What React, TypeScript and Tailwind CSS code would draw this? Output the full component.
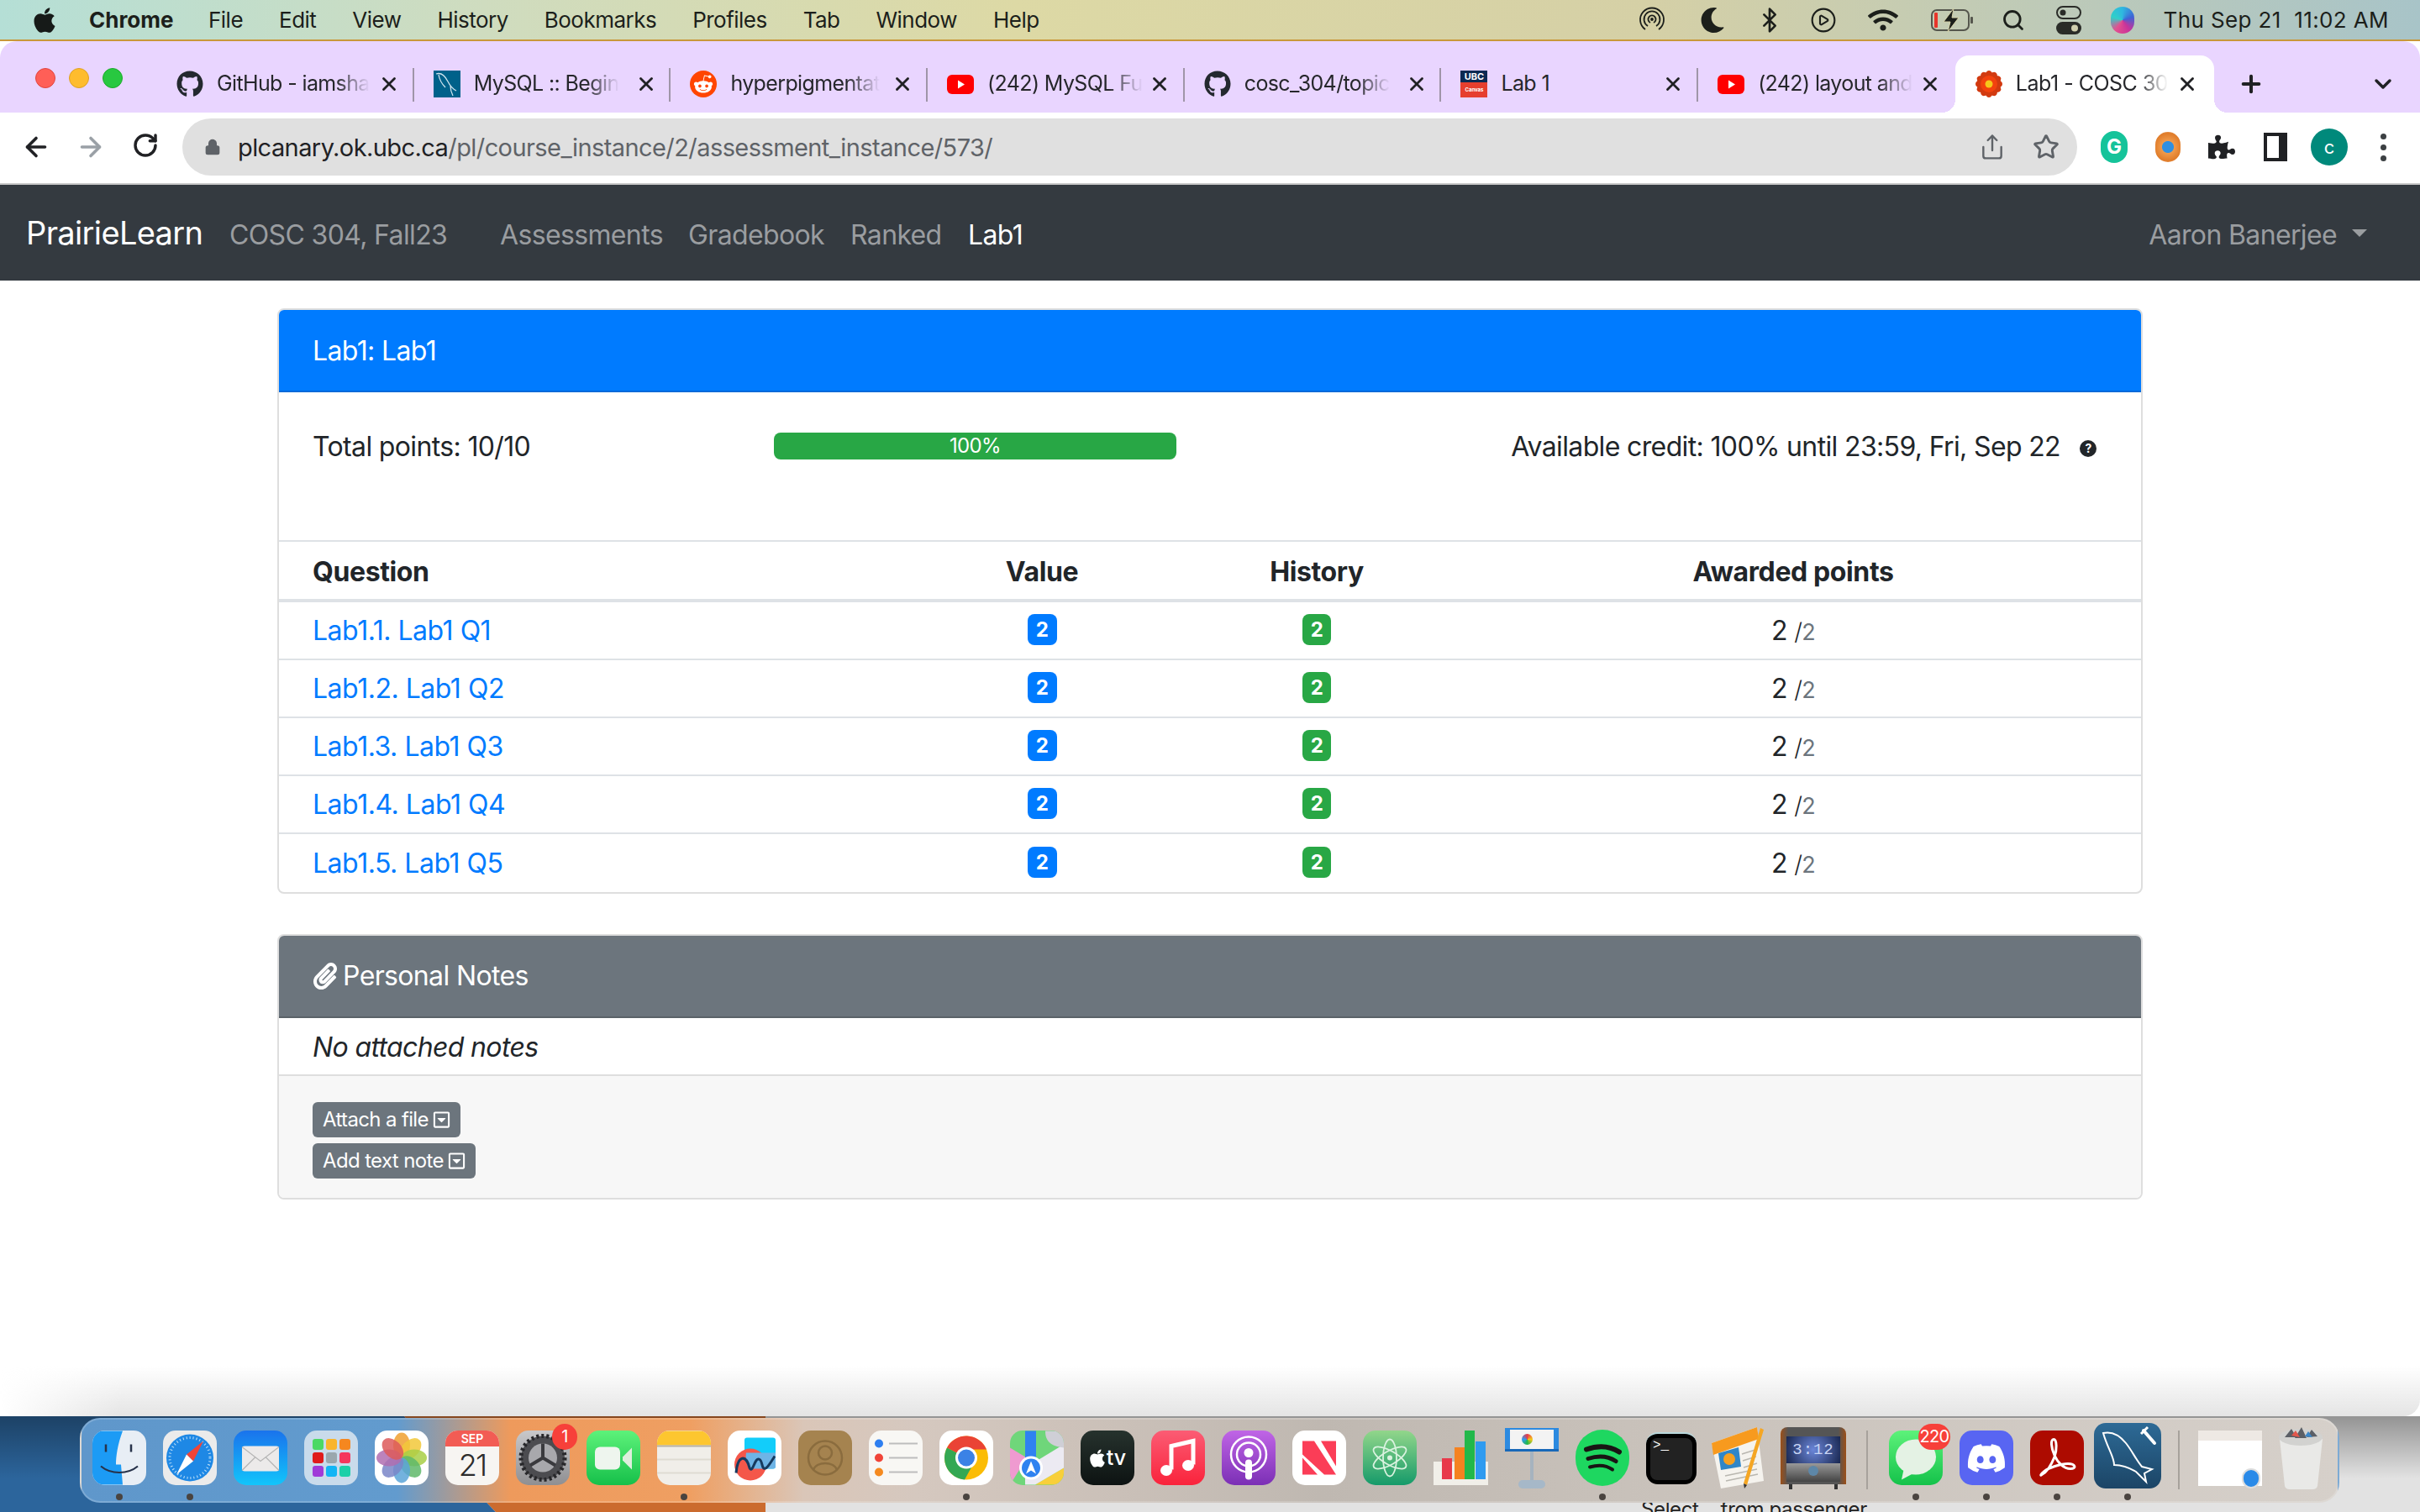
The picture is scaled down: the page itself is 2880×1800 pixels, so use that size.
import { ReactNode } from "react";
import { FaApple, FaDiscord, FaGithub, FaMoon, FaPaperclip, FaPuzzlePiece, FaRedditAlien, FaRegCaretSquareDown, FaWifi } from "react-icons/fa";
import { ArrowLeft, ArrowRight, Bluetooth, ChevronDown, CirclePlay, Lock, Plus, RotateCw, Search, Share, Star, X } from "lucide-react";

function YouTubeIcon() {
  return (
    <svg viewBox="0 0 32 32" className="w-8 h-8">
      <rect x="0" y="5" width="32" height="23" rx="6" fill="#ff0000" />
      <path d="M13 11.5 21 16.5 13 21.5z" fill="#fff" />
    </svg>
  );
}

function MysqlFavicon() {
  return (
    <svg viewBox="0 0 32 32" className="w-8 h-8">
      <rect width="32" height="32" fill="#00618a" />
      <path d="M3 4c6-2 11 3 14 9s6 9 10 11M6 5c1 6 4 11 8 15M20 18c0 4 1 8 3 12" fill="none" stroke="#cfe3ee" strokeWidth="1.3" />
    </svg>
  );
}

function RedditIcon() {
  return (
    <div className="w-8 h-8 rounded-full bg-[#ff4500] flex items-center justify-center">
      <FaRedditAlien className="w-6 h-6 text-white" />
    </div>
  );
}

function CanvasIcon() {
  return (
    <div className="w-8 h-8 flex flex-col text-white font-bold text-center">
      <div className="h-[14px] bg-[#0c2a52] text-[11px] leading-[14px]">UBC</div>
      <div className="h-[18px] bg-[#e63f2e] text-[6px] leading-[18px]">Canvas</div>
    </div>
  );
}

function PrairieIcon() {
  return (
    <svg viewBox="0 0 32 32" className="w-8 h-8">
      {[0, 30, 60, 90, 120, 150].map((a) => (
        <ellipse key={a} cx="16" cy="16" rx="7" ry="16" fill="#d23a10" transform={`rotate(${a} 16 16)`} />
      ))}
      <circle cx="16" cy="16" r="10" fill="#f2420e" />
      <circle cx="16" cy="16" r="4.5" fill="#f6c71a" />
    </svg>
  );
}

// titles are what the tab strip actually shows, the rest is faded away
const tabs: { title: string; icon: ReactNode; solid?: boolean }[] = [
  { title: "GitHub - iamsha", icon: <FaGithub className="w-8 h-8 text-[#24292f]" /> },
  { title: "MySQL :: Begin", icon: <MysqlFavicon /> },
  { title: "hyperpigmentat", icon: <RedditIcon /> },
  { title: "(242) MySQL Fu", icon: <YouTubeIcon /> },
  { title: "cosc_304/topic", icon: <FaGithub className="w-8 h-8 text-[#24292f]" /> },
  { title: "Lab 1", icon: <CanvasIcon />, solid: true },
  { title: "(242) layout and", icon: <YouTubeIcon /> },
];

function Tab({ title, icon, last, solid }: { title: string; icon: ReactNode; last: boolean; solid?: boolean }) {
  return (
    <div className="w-[305.7px] h-[68px] flex items-center shrink-0 relative pl-[23px]">
      <div className="w-8 h-8 shrink-0 flex items-center justify-center">{icon}</div>
      <div className="ml-4 w-[190px] whitespace-nowrap text-[25px] text-[#26272b] tracking-[-0.025em]">
        <span className={solid ? "" : "inline-block [mask-image:linear-gradient(to_right,black_78%,transparent)]"}>{title}</span>
      </div>
      <X className="w-[26px] h-[26px] ml-[2px] text-[#202124]" strokeWidth={2.6} />
      {!last && <div className="absolute right-0 top-[15px] w-[2px] h-10 bg-[#9f95a8]" />}
    </div>
  );
}

function ActiveTab() {
  return (
    <div className="w-[308px] h-[68px] bg-white rounded-t-[16px] flex items-center shrink-0 relative pl-[24px]">
      <div className="absolute -left-4 bottom-0 w-4 h-4 bg-[radial-gradient(circle_at_0_0,transparent_16px,white_16px)]" />
      <div className="absolute -right-4 bottom-0 w-4 h-4 bg-[radial-gradient(circle_at_100%_0,transparent_16px,white_16px)]" />
      <PrairieIcon />
      <div className="ml-4 w-[186px] whitespace-nowrap text-[25px] text-[#26272b] tracking-[-0.02em]">
        <span className="inline-block [mask-image:linear-gradient(to_right,black_80%,transparent)]">Lab1 - COSC 30</span>
      </div>
      <X className="w-[26px] h-[26px] ml-[5px] text-[#202124]" strokeWidth={2.6} />
    </div>
  );
}

function MenuBar() {
  const items = ["File", "Edit", "View", "History", "Bookmarks", "Profiles", "Tab", "Window", "Help"];
  return (
    <div className="h-[49px] shrink-0 flex items-center text-[#1c1f1b] text-[26px] bg-[linear-gradient(90deg,#b5dfd6_0%,#cfdcbf_20%,#ddd9a5_42%,#d5d0a6_68%,#a8c4c8_100%)] border-b-2 border-[#c9983a]">
      <FaApple className="w-[30px] h-[34px] ml-[38px] text-[#161a18]" />
      <span className="ml-[38px] font-bold w-[117px]">Chrome</span>
      <div className="flex gap-[43px] ml-[25px] tracking-[-0.02em]">
        {items.map((m) => (
          <span key={m}>{m}</span>
        ))}
      </div>
      <div className="ml-auto flex items-center gap-[32px] text-[#1c1f1b]">
        <svg viewBox="0 0 32 32" className="w-8 h-8" fill="none" stroke="currentColor" strokeWidth="1.8">
          <path d="M8 27A14 14 0 1 1 24 27M11 23A9.5 9.5 0 1 1 21 23M14 19a4.5 4.5 0 1 1 4 0" />
          <circle cx="16" cy="15" r="1" fill="currentColor" />
        </svg>
        <FaMoon className="w-[30px] h-[30px] ml-[9px]" />
        <Bluetooth className="w-8 h-8 ml-[5px]" strokeWidth={2} />
        <CirclePlay className="w-8 h-8" strokeWidth={1.6} />
        <FaWifi className="w-[36px] h-[30px] ml-[5px]" />
        <svg viewBox="0 0 52 30" className="w-[52px] h-[30px] ml-[7px]">
          <rect x="1" y="3" width="44" height="24" rx="6" fill="none" stroke="#55564d" strokeWidth="2" />
          <rect x="47" y="11" width="3" height="8" rx="1" fill="#55564d" />
          <rect x="4" y="6" width="4" height="18" rx="1" fill="#e8352b" />
          <path d="M27 1 15 17h8l-3 12 13-17h-8z" fill="#1c1f1b" stroke="#d6d2a8" strokeWidth="1" />
        </svg>
        <Search className="w-[28px] h-[28px]" strokeWidth={2.4} />
        <svg viewBox="0 0 30 34" className="w-[30px] h-[34px] ml-[5px]">
          <rect x="1" y="1" width="28" height="14" rx="7" fill="none" stroke="#2a2c28" strokeWidth="2" />
          <circle cx="8" cy="8" r="3.5" fill="#2a2c28" />
          <rect x="0" y="19" width="30" height="15" rx="7.5" fill="#2a2c28" />
          <circle cx="22" cy="26.5" r="4" fill="#d0cfae" />
        </svg>
        <div className="w-7 h-8 rounded-full bg-[conic-gradient(#2fb7e0,#3f63d6,#c8339a,#e3508f,#2fd0c8,#2fb7e0)] ml-[3px]" />
        <span className="mr-[37px] ml-[3px] text-[26px] whitespace-pre tracking-[0.015em]">Thu Sep 21  11:02 AM</span>
      </div>
    </div>
  );
}

function TabStrip() {
  return (
    <div className="h-[85px] shrink-0 bg-[#e9d5ff] flex items-end rounded-t-[20px] relative">
      <div className="w-[187px] h-[68px] shrink-0 flex items-center gap-4 pl-[42px] pb-[14px]">
        <div className="w-6 h-6 rounded-full bg-[#ff5f57] border border-[#e0443e]" />
        <div className="w-6 h-6 rounded-full bg-[#febc2e] border border-[#dea123]" />
        <div className="w-6 h-6 rounded-full bg-[#28c840] border border-[#1aab29]" />
      </div>
      {tabs.map((t, i) => (
        <Tab key={t.title} title={t.title} icon={t.icon} solid={t.solid} last={i === tabs.length - 1} />
      ))}
      <ActiveTab />
      <div className="h-[68px] flex items-center ml-[28px]">
        <Plus className="w-8 h-8 text-[#202124]" strokeWidth={3} />
      </div>
      <div className="h-[68px] flex items-center ml-auto mr-[28px]">
        <ChevronDown className="w-8 h-8 text-[#202124]" strokeWidth={2.6} />
      </div>
    </div>
  );
}

function Toolbar() {
  return (
    <div className="h-[86px] shrink-0 bg-white border-b-2 border-[#c9c9c9] flex items-center pl-[21px] pb-[2px]">
      <div className="flex gap-[21px] text-[#202124]">
        <div className="w-11 flex justify-center">
          <ArrowLeft className="w-9 h-9" strokeWidth={2.4} />
        </div>
        <div className="w-11 flex justify-center">
          <ArrowRight className="w-9 h-9 text-[#9aa0a6]" strokeWidth={2.4} />
        </div>
        <div className="w-11 flex justify-center">
          <RotateCw className="w-8 h-8" strokeWidth={2.6} />
        </div>
      </div>
      <div className="ml-[22px] w-[2255px] h-[68px] rounded-full bg-[#e0e0e0] flex items-center pl-[26px]">
        <Lock className="w-[20px] h-[24px] text-[#5f6368] fill-[#5f6368]" strokeWidth={2} />
        <span className="ml-[20px] text-[29px] tracking-[-0.02em] pt-[2px] text-[#202124]">
          plcanary.ok.ubc.ca<span className="text-[#5f6368]">/pl/course_instance/2/assessment_instance/573/</span>
        </span>
        <div className="ml-auto flex gap-[32px] mr-[21px] text-[#5f6368]">
          <Share className="w-8 h-8" strokeWidth={1.8} />
          <Star className="w-8 h-8" strokeWidth={2.2} />
        </div>
      </div>
      <div className="ml-[22px] flex items-center gap-[20px]">
        <div className="w-11 flex justify-center">
          <div className="w-8 h-[38px] rounded-full bg-[#15c39a] flex items-center justify-center text-white font-bold text-[24px]">G</div>
        </div>
        <div className="w-11 flex justify-center">
          <div className="w-[30px] h-9 rounded-full bg-[radial-gradient(circle,#2f8fe0_28%,#f09a4a_32%,#e07c2a_70%,#f6c9a0_100%)]" />
        </div>
        <div className="w-11 flex justify-center">
          <FaPuzzlePiece className="w-[32px] h-[32px] text-[#202124]" />
        </div>
        <div className="w-11 flex justify-center">
          <div className="w-[28px] h-[34px] border-y-[4px] border-l-[4px] border-r-[10px] border-[#202124]" />
        </div>
        <div className="w-11 h-11 rounded-full bg-[#00897b] flex items-center justify-center text-white text-[22px]">c</div>
        <div className="w-11 flex flex-col items-center gap-[6px]">
          <div className="w-[7px] h-[7px] rounded-full bg-[#3c4043]" />
          <div className="w-[7px] h-[7px] rounded-full bg-[#3c4043]" />
          <div className="w-[7px] h-[7px] rounded-full bg-[#3c4043]" />
        </div>
      </div>
    </div>
  );
}

function Navbar() {
  return (
    <div className="h-[114px] shrink-0 bg-[#343a40] flex items-center text-[32px] text-[#9a9da0] pl-[31px] tracking-[-0.02em]">
      <span className="text-[38px] text-white w-[242px]">PrairieLearn</span>
      <span className="w-[322px] pt-[5px]">COSC 304, Fall23</span>
      <span className="w-[224px] pt-[5px]">Assessments</span>
      <span className="w-[193px] pt-[5px]">Gradebook</span>
      <span className="w-[140px] pt-[5px]">Ranked</span>
      <span className="text-white pt-[5px]">Lab1</span>
      <span className="ml-auto pt-[5px]">Aaron Banerjee</span>
      <div className="ml-[18px] mr-[63px] mt-[1px] w-0 h-0 border-x-[9px] border-x-transparent border-t-[9px] border-t-[#9a9da0]" />
    </div>
  );
}

const rows = ["Lab1.1. Lab1 Q1", "Lab1.2. Lab1 Q2", "Lab1.3. Lab1 Q3", "Lab1.4. Lab1 Q4", "Lab1.5. Lab1 Q5"];

function AssessmentCard() {
  return (
    <div className="border-2 border-[#dedede] rounded-lg overflow-hidden text-[32px] text-[#212529] tracking-[-0.02em]">
      <div className="h-[98px] bg-[#007bff] border-b-2 border-[#0069d9] flex items-center px-10 pt-[2px] text-white">Lab1: Lab1</div>
      <div className="h-[178px] pt-[41px] pl-10 pr-[53px] flex items-start border-b-2 border-[#dee2e6]">
        <span className="w-[549px] leading-[48px]">Total points: 10/10</span>
        <div className="w-[479px] h-8 mt-[7px] rounded-lg bg-[#28a745] flex items-center justify-center text-white text-[24px]">100%</div>
        <span className="ml-auto leading-[48px]">Available credit: 100% until 23:59, Fri, Sep 22</span>
        <div className="w-5 h-5 ml-[23px] mt-[16px] rounded-full bg-[#212529] text-white text-[14px] font-bold leading-5 text-center">?</div>
      </div>
      <div className="grid grid-cols-[734px_348px_306px_1fr] h-[72px] items-center font-bold tracking-[-0.012em] border-b-4 border-[#dee2e6]">
        <span className="pl-10 pt-1">Question</span>
        <span className="text-center pt-1">Value</span>
        <span className="text-center pt-1">History</span>
        <span className="text-center pt-1">Awarded points</span>
      </div>
      {rows.map((r, i) => (
        <div key={r} className={`grid grid-cols-[734px_348px_306px_1fr] h-[69px] items-center ${i < rows.length - 1 ? "border-b-2 border-[#dee2e6]" : ""}`}>
          <span className="pl-10 text-[#007bff] tracking-[-0.015em]">{r}</span>
          <div className="flex justify-center">
            <span className="w-[35px] h-[37px] rounded-lg bg-[#007bff] text-white font-bold text-[24px] leading-[37px] text-center -mt-[3px]">2</span>
          </div>
          <div className="flex justify-center">
            <span className="w-[34px] h-[37px] rounded-lg bg-[#28a745] text-white font-bold text-[24px] leading-[37px] text-center -mt-[3px]">2</span>
          </div>
          <div className="text-center">
            2 <span className="text-[28px] font-light">/</span>
            <span className="text-[27px] text-[#6c757d]">2</span>
          </div>
        </div>
      ))}
    </div>
  );
}

function NotesCard() {
  return (
    <div className="mt-[48px] border-2 border-[#dedede] rounded-lg overflow-hidden text-[32px] text-[#212529] tracking-[-0.02em]">
      <div className="h-[98px] bg-[#6c757d] border-b-2 border-[#5a6268] flex items-center pl-10 text-white">
        <FaPaperclip className="w-[30px] h-[32px] mr-[6px]" />
        Personal Notes
      </div>
      <div className="h-[69px] bg-white border-b-2 border-[#dedede] pl-10 flex items-center italic pt-[2px]">No attached notes</div>
      <div className="h-[145px] bg-[#f7f7f7] pl-10 pt-[31px] flex flex-col items-start gap-[7px]">
        <NoteButton label="Attach a file" />
        <NoteButton label="Add text note" />
      </div>
    </div>
  );
}

function NoteButton({ label }: { label: string }) {
  return (
    <div className="h-[42px] px-3 rounded-md bg-[#6c757d] text-white text-[24px] flex items-center gap-[5px]">
      {label}
      <FaRegCaretSquareDown className="w-[21px] h-[22px]" />
    </div>
  );
}

function Tile({ className, children }: { className: string; children?: ReactNode }) {
  return <div className={`w-16 h-[65px] rounded-[15px] overflow-hidden relative flex items-center justify-center ${className}`}>{children}</div>;
}

function Svg({ children }: { children: ReactNode }) {
  return (
    <svg viewBox="0 0 64 64" className="w-full h-full absolute inset-0">
      {children}
    </svg>
  );
}

function Badge({ text, w }: { text: string; w: string }) {
  return <div className={`absolute -top-2 -right-[9px] h-[31px] rounded-full bg-[#f7403a] text-white text-[20px] leading-[31px] text-center tracking-[-0.03em] ${w}`}>{text}</div>;
}

const petals = ["#f0a030", "#f2c83a", "#a8cf45", "#5fb86a", "#5aa5d8", "#7a86c8", "#b06db0", "#dd5a5a"];

const dock: { w: string; dot?: boolean; el: ReactNode }[] = [
  {
    w: "w-16",
    dot: true,
    el: (
      <Tile className="bg-[#e8eef5]">
        <Svg>
          <path d="M0 0H36C30 16 28 30 28 40H34L36 64H0z" fill="#1c9bf5" />
          <path d="M16 16v9M46 16v9" stroke="#27324a" strokeWidth="2.5" />
          <path d="M10 42c12 10 32 10 44 0" stroke="#27324a" strokeWidth="2.2" fill="none" />
        </Svg>
      </Tile>
    ),
  },
  {
    w: "w-16",
    dot: true,
    el: (
      <Tile className="bg-[#ebebeb]">
        <Svg>
          <circle cx="32" cy="32" r="28" fill="#1e88e5" />
          <circle cx="32" cy="32" r="24" fill="none" stroke="#bfe0f8" strokeWidth="3" strokeDasharray="1 3" />
          <path d="M48 12 28 28 36 36z" fill="#f04438" />
          <path d="M16 52 28 28 36 36z" fill="#fff" />
        </Svg>
      </Tile>
    ),
  },
  {
    w: "w-16",
    el: (
      <Tile className="bg-[linear-gradient(#1a73ec,#12c5fb)]">
        <Svg>
          <rect x="10" y="18" width="44" height="30" rx="3" fill="#eceaea" />
          <path d="M10 19 32 36 54 19M10 47 26 31M54 47 38 31" stroke="#b5b5b5" strokeWidth="1.2" fill="none" />
        </Svg>
      </Tile>
    ),
  },
  {
    w: "w-16",
    el: (
      <Tile className="bg-[#c9dbeb]">
        <div className="grid grid-cols-3 gap-[3px]">
          {["bg-[#4bd964]", "bg-[#f9b52c]", "bg-[#f5871f]", "bg-[#e01b1b]", "bg-[#9aa7ad]", "bg-[#f5375c]", "bg-[#a03bd8]", "bg-[#12b5f5]", "bg-[#1bd0a8]"].map((c) => (
            <div key={c} className={`w-[13px] h-[13px] rounded-[3px] ${c}`} />
          ))}
        </div>
      </Tile>
    ),
  },
  {
    w: "w-16",
    el: (
      <Tile className="bg-white">
        <Svg>
          {petals.map((c, i) => (
            <ellipse key={c} cx="32" cy="17" rx="10" ry="15" fill={c} opacity="0.85" transform={`rotate(${i * 45} 32 32)`} />
          ))}
        </Svg>
      </Tile>
    ),
  },
  {
    w: "w-16",
    el: (
      <Tile className="bg-[#f7f5f2] flex-col justify-start">
        <div className="w-full h-[19px] bg-[#f25c54] text-white text-[14px] font-semibold leading-[19px] text-center">SEP</div>
        <div className="text-[36px] font-light leading-[44px] text-[#2c2c2c] tracking-[-0.05em]">21</div>
      </Tile>
    ),
  },
  {
    w: "w-16",
    el: (
      <div className="relative">
        <Tile className="bg-[linear-gradient(#c8c8ca,#8f8f92)]">
          <Svg>
            <circle cx="32" cy="32" r="26" fill="#4c4c50" />
            <circle cx="32" cy="32" r="26" fill="none" stroke="#27272a" strokeWidth="5" strokeDasharray="3 3" />
            <circle cx="32" cy="32" r="17" fill="#a8a8ac" />
            <path d="M32 32V15M32 32 17 41M32 32 47 41" stroke="#3a3a3e" strokeWidth="4" />
          </Svg>
        </Tile>
        <Badge text="1" w="w-[30px]" />
      </div>
    ),
  },
  {
    w: "w-16",
    el: (
      <Tile className="bg-[linear-gradient(#5df27a,#16c04a)]">
        <Svg>
          <rect x="10" y="19" width="30" height="27" rx="6" fill="#eef5ee" />
          <path d="M43 31 54 20V46L43 35z" fill="#dfeedd" />
        </Svg>
      </Tile>
    ),
  },
  {
    w: "w-16",
    dot: true,
    el: (
      <Tile className="bg-[#f0eee9]">
        <Svg>
          <rect width="64" height="17" fill="#fdc62f" />
          <path d="M0 18H64" stroke="#b7b2a5" strokeWidth="2" />
          <path d="M0 34H64M0 50H64" stroke="#dedbd3" strokeWidth="2" />
        </Svg>
      </Tile>
    ),
  },
  {
    w: "w-16",
    el: (
      <Tile className="bg-white">
        <Svg>
          <rect x="20" y="8" width="37" height="37" rx="3" fill="#12cdfa" />
          <circle cx="27" cy="40" r="19" fill="#f4574a" />
          <path d="M22 26H57V42a3 3 0 0 1-3 3H26C22 38 21 32 22 26z" fill="#6eb4e6" />
          <path d="M10 50C12 28 22 28 26 44 30 52 32 30 38 34 42 36 40 48 46 44 50 40 52 36 56 30" fill="none" stroke="#163a5f" strokeWidth="3" />
        </Svg>
      </Tile>
    ),
  },
  {
    w: "w-16",
    el: (
      <Tile className="bg-[#a5834f]">
        <Svg>
          <circle cx="32" cy="32" r="20" fill="none" stroke="#8a6c3e" strokeWidth="2.5" />
          <circle cx="32" cy="26" r="8" fill="none" stroke="#8a6c3e" strokeWidth="2.5" />
          <path d="M18 46c4-10 24-10 28 0" fill="none" stroke="#8a6c3e" strokeWidth="2.5" />
        </Svg>
      </Tile>
    ),
  },
  {
    w: "w-16",
    el: (
      <Tile className="bg-[#f8f7f4]">
        <Svg>
          <circle cx="12" cy="15" r="5" fill="#2f7ff0" />
          <circle cx="12" cy="32" r="5" fill="#f04438" />
          <circle cx="12" cy="49" r="5" fill="#f58a1f" />
          <path d="M24 15H58M24 32H58M24 49H58" stroke="#bdbdbd" strokeWidth="2" />
        </Svg>
      </Tile>
    ),
  },
  {
    w: "w-16",
    dot: true,
    el: (
      <Tile className="bg-white">
        <Svg>
          <circle cx="32" cy="32" r="26" fill="#fbbc05" />
          <path d="M32 32 9 20A26 26 0 0 1 56 22L32 22z" fill="#ea4335" />
          <path d="M9 20A26 26 0 0 0 30 58L42 36 32 32z" fill="#34a853" />
          <circle cx="32" cy="32" r="13" fill="#fff" />
          <circle cx="32" cy="32" r="10" fill="#3b82e6" />
        </Svg>
      </Tile>
    ),
  },
  {
    w: "w-16",
    el: (
      <Tile className="bg-[#6fd67a]">
        <Svg>
          <path d="M0 20 20 32 0 64z" fill="#ef9ad0" />
          <path d="M30 64 64 44V64z" fill="#f8cf3a" />
          <path d="M18 44 64 16V44L30 64H18z" fill="#eceaf2" />
          <rect x="18" y="0" width="13" height="40" fill="#2f82f0" />
          <path d="M42 0c0 12 6 18 22 20v-20z" fill="#cfcfd6" />
          <circle cx="25" cy="44" r="14" fill="#fff" />
          <circle cx="25" cy="44" r="11" fill="#2f82f0" />
          <path d="M25 36 31 51 25 47 19 51z" fill="#fff" />
        </Svg>
      </Tile>
    ),
  },
  {
    w: "w-16",
    el: (
      <Tile className="bg-[linear-gradient(#26322d,#0d1312)] text-white gap-[1px]">
        <FaApple className="w-[20px] h-[24px]" />
        <span className="text-[25px] font-medium leading-none">tv</span>
      </Tile>
    ),
  },
  {
    w: "w-16",
    el: (
      <Tile className="bg-[linear-gradient(#fb5c74,#fa233b)]">
        <Svg>
          <path d="M24 46V18L50 12V40" fill="none" stroke="#fff" strokeWidth="5" />
          <ellipse cx="18" cy="47" rx="7" ry="6.5" fill="#fff" />
          <ellipse cx="44" cy="41" rx="7" ry="6.5" fill="#fff" />
        </Svg>
      </Tile>
    ),
  },
  {
    w: "w-16",
    el: (
      <Tile className="bg-[linear-gradient(#c065e6,#7b2fb5)]">
        <Svg>
          <circle cx="32" cy="28" r="21" fill="none" stroke="#fff" strokeWidth="2.5" />
          <circle cx="32" cy="28" r="14" fill="none" stroke="#fff" strokeWidth="2.5" />
          <circle cx="32" cy="26" r="5.5" fill="#fff" />
          <rect x="28" y="34" width="8" height="24" rx="4" fill="#fff" />
        </Svg>
      </Tile>
    ),
  },
  {
    w: "w-16",
    el: (
      <Tile className="bg-white">
        <Svg>
          <path d="M12 12H26L52 52H38L12 28z" fill="#fb3d57" />
          <path d="M12 32 30 52H12zM34 12H52V42z" fill="#fb3d57" />
        </Svg>
      </Tile>
    ),
  },
  {
    w: "w-16",
    el: (
      <Tile className="bg-[linear-gradient(#92d68a,#159a6a)]">
        <Svg>
          <g fill="none" stroke="#d9f2df" strokeWidth="1.8">
            <ellipse cx="32" cy="32" rx="8" ry="22" transform="rotate(60 32 32)" />
            <ellipse cx="32" cy="32" rx="8" ry="22" transform="rotate(-60 32 32)" />
            <ellipse cx="32" cy="32" rx="8" ry="22" />
          </g>
          <circle cx="32" cy="32" r="3" fill="#d9f2df" />
        </Svg>
      </Tile>
    ),
  },
  {
    w: "w-[65px]",
    el: (
      <div className="w-[65px] h-[65px] relative">
        <div className="absolute bottom-0 inset-x-0 h-[28px] bg-[#f1efe9]" />
        <div className="absolute bottom-[7px] left-[10px] w-[12px] h-[25px] bg-[#e8394a]" />
        <div className="absolute bottom-[7px] left-[25px] w-[12px] h-[38px] bg-[#f58220]" />
        <div className="absolute bottom-[7px] left-[37px] w-[12px] h-[58px] bg-[#22b84a]" />
        <div className="absolute bottom-[7px] left-[50px] w-[12px] h-[45px] bg-[#2f9bf0]" />
      </div>
    ),
  },
  {
    w: "w-16",
    el: (
      <div className="w-16 h-[72px] relative flex flex-col items-center">
        <div className="w-16 h-[28px] bg-[#2c8ae0] border-b-[3px] border-[#1868b8] flex items-start justify-center pt-[2px]">
          <div className="w-[52px] h-[23px] bg-[#f3f3f3] flex items-center pl-[14px]">
            <div className="w-[13px] h-[13px] rounded-full bg-[conic-gradient(#e8394a,#f5c71a,#22b84a,#2f9bf0,#e8394a)]" />
          </div>
        </div>
        <div className="w-[4px] h-[34px] bg-[#a6b3bf]" />
        <div className="w-[32px] h-[10px] rounded-full bg-[#a6b8c8]" />
      </div>
    ),
  },
  {
    w: "w-16",
    dot: true,
    el: (
      <div className="w-16 h-[67px] rounded-full bg-[#1ed760] relative">
        <Svg>
          <g fill="none" stroke="#191414" strokeLinecap="round">
            <path d="M13 22c14-5 28-4 39 3" strokeWidth="6" />
            <path d="M15 33c12-4 24-3 33 3" strokeWidth="5" />
            <path d="M17 43c10-3 20-2 27 3" strokeWidth="4" />
          </g>
        </Svg>
      </div>
    ),
  },
  {
    w: "w-[60px]",
    el: (
      <div className="w-[60px] h-[62px] rounded-[14px] bg-black border-t-2 border-[#b9d8dc] p-[5px]">
        <div className="w-full h-full rounded-[8px] bg-[#222] relative">
          <span className="absolute left-[3px] top-[1px] text-white text-[16px] leading-none [font-family:'Liberation_Mono',monospace]">&gt;_</span>
        </div>
      </div>
    ),
  },
  {
    w: "w-[60px]",
    el: (
      <svg viewBox="0 0 64 73" className="w-16 h-[73px] shrink-0">
        <path d="M0 19 54 0 62 64 11 73z" fill="#f5f3ee" />
        <path d="M0 19 54 0 56 14 2 33z" fill="#f79a1e" />
        <path d="M8 31 32 24 35 47 11 51z" fill="#2f86c8" />
        <circle cx="21" cy="38" r="7" fill="#f6a020" />
        <path d="M36 32 52 27M37 40 53 35M38 48 54 43M16 58 54 50M17 64 55 56" stroke="#b9b7b0" strokeWidth="1.5" />
        <path d="M58 1 62 3 42 69 38 67z" fill="#f5a623" />
        <path d="M38 67 42 69 39 73z" fill="#333" />
      </svg>
    ),
  },
  {
    w: "w-[78px]",
    el: (
      <div className="w-[78px] flex flex-col items-center shrink-0">
        <div className="w-[78px] h-[68px] rounded-t-[8px] bg-[linear-gradient(90deg,#9c4f18,#555_12%,#555_88%,#9c4f18)] flex flex-col items-center pt-[11px]">
          <div className="w-[64px] h-[32px] bg-[radial-gradient(circle,#6b86d8,#18264f)] text-[#c9d6f5] text-[19px] leading-[32px] text-center tracking-wider [font-family:'Liberation_Mono',monospace]">3:12</div>
          <div className="w-[64px] h-[22px] bg-[linear-gradient(#999,#444)] flex justify-center pt-[3px]">
            <div className="w-[12px] h-[12px] rounded-full bg-[#5d87a8]" />
          </div>
        </div>
        <div className="w-[64px] h-[6px] flex justify-between px-[3px]">
          <div className="w-[4px] h-[6px] bg-[#333]" />
          <div className="w-[4px] h-[6px] bg-[#333]" />
        </div>
      </div>
    ),
  },
];

const dockRight: { w: string; el: ReactNode }[] = [
  {
    w: "w-16",
    el: (
      <div className="relative">
        <Tile className="bg-[linear-gradient(#5df27a,#14c24a)]">
          <Svg>
            <ellipse cx="32" cy="31" rx="24" ry="21" fill="#e4f2e4" />
            <path d="M18 44 15 58 30 50z" fill="#e4f2e4" />
          </Svg>
        </Tile>
        <Badge text="220" w="w-[38px]" />
      </div>
    ),
  },
  {
    w: "w-16",
    el: (
      <Tile className="bg-[#5865f2]">
        <FaDiscord className="w-[48px] h-[48px] text-white" />
      </Tile>
    ),
  },
  {
    w: "w-16",
    el: (
      <Tile className="bg-[#ad0b00]">
        <Svg>
          <path d="M14 52c6-3 11-11 15-21 3-8 3-21-1-21s-3 10 1 19 11 16 19 16 6-6-3-6-23 5-28 9-5 6-3 4z" fill="none" stroke="#fff" strokeWidth="3" />
        </Svg>
      </Tile>
    ),
  },
  {
    w: "w-[80px] -ml-2",
    el: (
      <div className="w-[80px] h-[78px] rounded-[14px] bg-[linear-gradient(#2d6a96,#1c4566)] shrink-0 -mt-[6px]">
        <svg viewBox="0 0 80 78" className="w-full h-full">
          <path d="M11 12C20 10 30 14 38 24 46 34 50 44 57 52L69 55 60 60 62 70 50 58C40 52 30 50 24 50 24 40 16 30 11 12Z" fill="none" stroke="#fff" strokeWidth="2" />
          <path d="M59 9 72 24" stroke="#fff" strokeWidth="4" strokeLinecap="round" />
          <path d="M56 13 64 5" stroke="#fff" strokeWidth="3" />
        </svg>
      </div>
    ),
  },
];

function DockDot() {
  return <div className="absolute left-1/2 -translate-x-1/2 top-[75px] w-2 h-2 rounded-full bg-[#4a4440]" />;
}

function Dock() {
  return (
    <div className="absolute left-[95px] top-[1688px] w-[2689px] h-[101px] rounded-[24px] border-2 border-[#ffffff30] bg-[linear-gradient(90deg,#5f97cb_0%,#629bce_14%,#ee9a5c_19%,#ef9f62_27%,#dac6b8_32%,#d5c8bf_37%,#bfb8b1_55%,#c9c2bb_70%,#d6d0ca_100%)] flex items-start gap-5 pl-[13px] pt-[13px]">
      {dock.map((d, i) => (
        <div key={i} className={`${d.w} shrink-0 relative h-[65px] flex items-center justify-center`}>
          {d.el}
          {d.dot && <DockDot />}
        </div>
      ))}
      <div className="w-[2px] h-[70px] bg-[#a7a29c] ml-[4px] mr-[5px] shrink-0" />
      {dockRight.map((d, i) => (
        <div key={i} className={`${d.w} shrink-0 relative h-[65px] flex items-center justify-center`}>
          {d.el}
          <DockDot />
        </div>
      ))}
      <div className="w-[2px] h-[70px] bg-[#a7a29c] mr-[2px] shrink-0" />
      <div className="w-[76px] h-[66px] shrink-0 bg-white relative">
        <div className="h-[12px] bg-[#eee9e4]" />
        <div className="absolute right-[2px] bottom-[-3px] w-[22px] h-[24px] rounded-full bg-[#2a8ae8] border-2 border-[#ddd]" />
      </div>
      <svg viewBox="0 0 55 76" className="w-[55px] h-[76px] shrink-0 -mt-[6px] -ml-[1px]">
        <path d="M2 16 8 72Q9 76 14 76H41Q46 76 47 72L53 16z" fill="#e9e9e7" />
        <ellipse cx="27" cy="14" rx="26" ry="10" fill="#d2d2d0" />
        <path d="M8 14 16 4 22 14zM20 15 28 2 34 15zM34 14 40 5 47 13z" fill="#5b5f66" />
        <path d="M16 12 21 6 26 14z" fill="#e2574c" />
        <path d="M32 13 36 7 41 14z" fill="#3b86c9" />
      </svg>
    </div>
  );
}

function Desktop() {
  return (
    <div className="absolute left-0 top-[1686px] w-[2880px] h-[114px] bg-[#e2e2e2]">
      <div className="absolute inset-0 bg-[#2c659c] [clip-path:polygon(0_0,481px_0,590px_100%,0_100%)]" />
      <div className="absolute inset-0 bg-[#cb6b2e] [clip-path:polygon(481px_0,911px_0,911px_100%,590px_100%)]" />
      <div className="absolute inset-0 bg-[linear-gradient(#00000059,transparent_65%)]" />
      <div className="absolute left-[1953px] top-[96px] flex gap-[26px] text-[24px] leading-[30px] tracking-[-0.015em] text-[#222] whitespace-nowrap">
        <span>Select</span>
        <span>from passenger</span>
      </div>
    </div>
  );
}

export default function App() {
  return (
    <div className="w-[2880px] h-[1800px] relative overflow-hidden flex flex-col [font-family:Inter,sans-serif]">
      <Desktop />
      <MenuBar />
      <div className="h-[1637px] shrink-0 flex flex-col rounded-b-[20px] overflow-hidden bg-white relative">
        <TabStrip />
        <Toolbar />
        <Navbar />
        <div className="flex-1 px-[330px] pt-[33px]">
          <AssessmentCard />
          <NotesCard />
        </div>
        <div className="absolute left-0 right-0 bottom-0 h-[60px] bg-[linear-gradient(transparent,#e4e4e4)] [mask-image:linear-gradient(to_right,transparent,black_5%)]" />
      </div>
      <Dock />
    </div>
  );
}
